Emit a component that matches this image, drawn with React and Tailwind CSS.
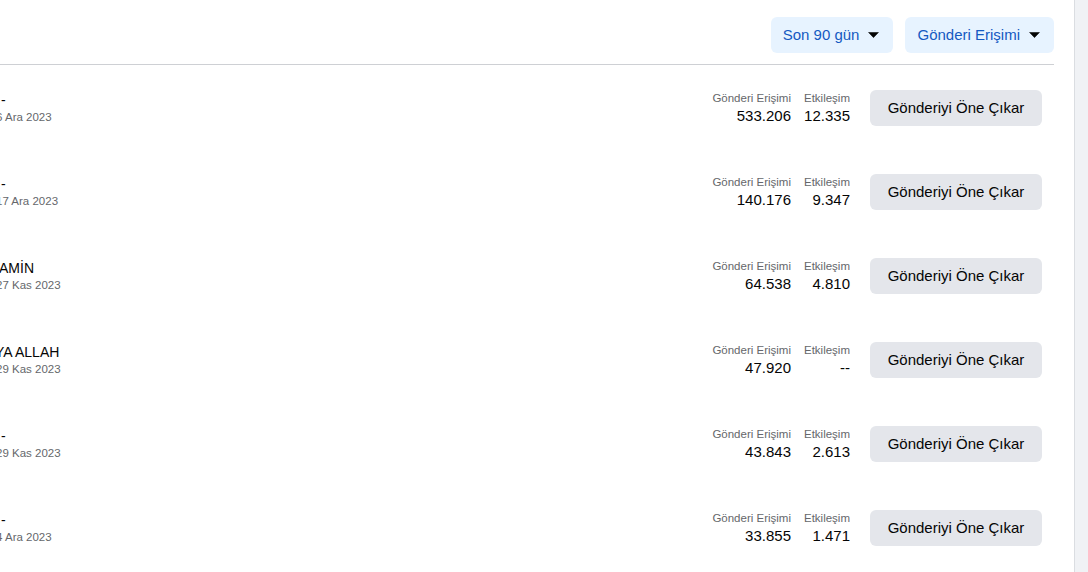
import React from 'react';

const posts = [
  { title: '-', titleCls: 'ml-[5px]', date: '6 Ara 2023', reach: '533.206', engagement: '12.335' },
  { title: '-', titleCls: 'ml-[5px]', date: '17 Ara 2023', reach: '140.176', engagement: '9.347' },
  { title: 'AMİN', titleCls: 'ml-[3px]', date: '27 Kas 2023', reach: '64.538', engagement: '4.810' },
  { title: 'YA ALLAH', titleCls: '-ml-[1px]', date: '29 Kas 2023', reach: '47.920', engagement: '--' },
  { title: '-', titleCls: 'ml-[5px]', date: '29 Kas 2023', reach: '43.843', engagement: '2.613' },
  { title: '-', titleCls: 'ml-[5px]', date: '4 Ara 2023', reach: '33.855', engagement: '1.471' },
];

const Caret = () => (
  <svg width="11" height="6" viewBox="0 0 11 6" className="shrink-0">
    <path d="M0.6 0.4 H10.4 L5.5 5.6 Z" fill="#050505" strokeLinejoin="round" stroke="#050505" strokeWidth="0.6" />
  </svg>
);

const FilterButton = ({ label }) => (
  <button className="flex h-[36px] items-center gap-[9px] rounded-[6px] bg-[#e7f3ff] pl-[12px] pr-[14px] text-[15px] text-[#1459c2]">
    <span>{label}</span>
    <Caret />
  </button>
);

const PostRow = ({ post }) => (
  <div className="flex h-[84px] items-center justify-between pr-[12px]">
    <div className="-ml-[4px] flex flex-col">
      <span className={`text-[14px] leading-[18px] text-[#050505] ${post.titleCls}`}>{post.title}</span>
      <span className="text-[11.5px] leading-[16px] text-[#65676b]">{post.date}</span>
    </div>
    <div className="flex items-center">
      <div className="flex gap-[13px] text-right">
        <div className="flex flex-col">
          <span className="text-[11.5px] leading-[16px] text-[#65676b]">Gönderi Erişimi</span>
          <span className="text-[15px] leading-[20px] text-[#050505]">{post.reach}</span>
        </div>
        <div className="flex flex-col">
          <span className="text-[11.5px] leading-[16px] text-[#65676b]">Etkileşim</span>
          <span className="text-[15px] leading-[20px] text-[#050505]">{post.engagement}</span>
        </div>
      </div>
      <button className="ml-[20px] flex h-[36px] w-[172px] items-center justify-center rounded-[6px] bg-[#e4e6eb] text-[15px] text-[#050505]">
        Gönderiyi Öne Çıkar
      </button>
    </div>
  </div>
);

export default function App() {
  return (
    <div className="flex h-[572px] w-[1088px] overflow-hidden bg-white font-['Liberation_Sans',Arial,sans-serif]">
      <main className="flex-1 overflow-hidden pr-[20px]">
        <div className="flex justify-end gap-[12px] border-b border-[#ced0d4] pt-[17px] pb-[11px]">
          <FilterButton label="Son 90 gün" />
          <FilterButton label="Gönderi Erişimi" />
        </div>
        <div className="pt-[1px]">
          {posts.map((post, i) => (
            <PostRow key={i} post={post} />
          ))}
        </div>
      </main>
      <aside className="w-[14px] border-l border-[#dadde1] bg-[#f0f2f5]" />
    </div>
  );
}
